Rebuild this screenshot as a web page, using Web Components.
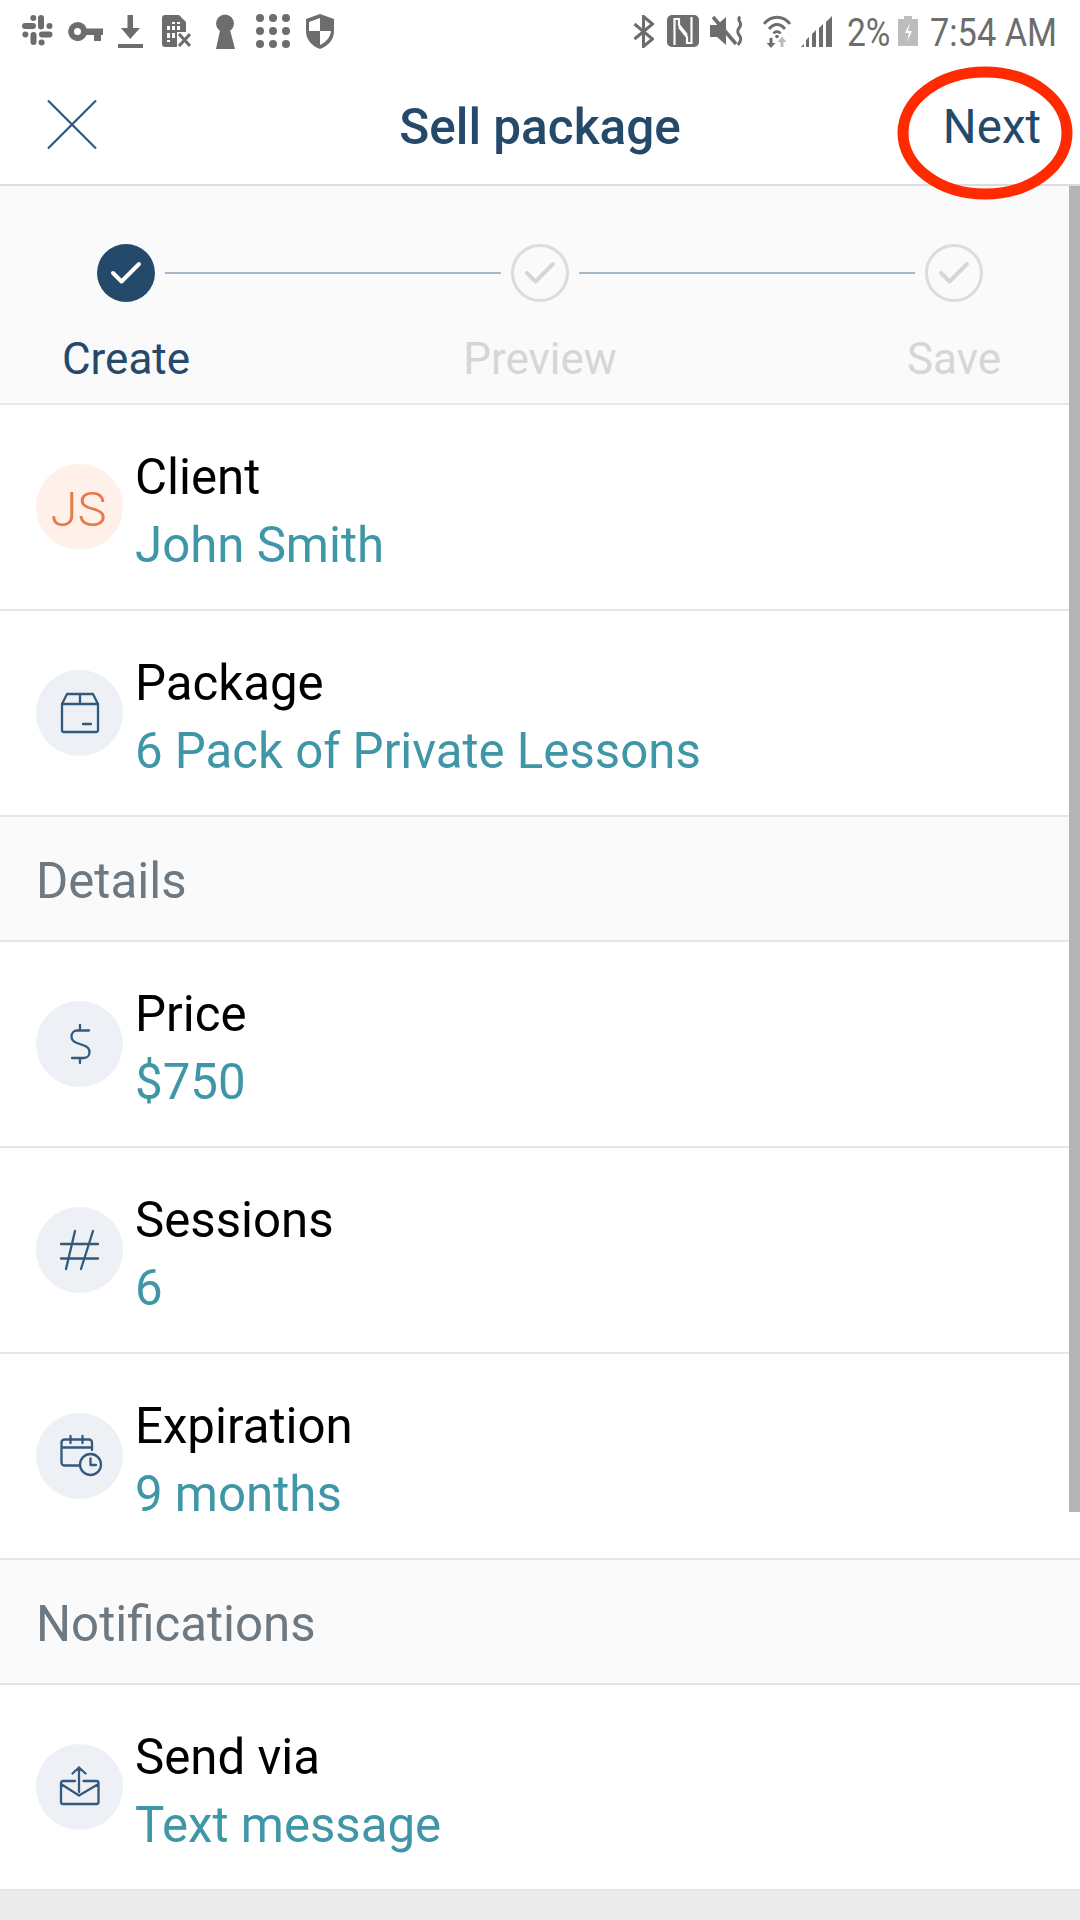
<!DOCTYPE html>
<html lang="en">
<head>
<meta charset="utf-8">
<title>Sell package</title>
<style>
html,body{margin:0;padding:0;background:#ebebeb}
body{width:1080px;height:1920px;overflow:hidden;position:relative;font-family:Roboto,"Liberation Sans",sans-serif}
</style>
</head>
<body>
<status-bar></status-bar>
<app-header heading="Sell package" action="Next"></app-header>
<step-bar></step-bar>
<form-row label="Client" value="John Smith"><round-badge tone="peach">JS</round-badge></form-row>
<form-row label="Package" value="6 Pack of Private Lessons"><round-badge><app-icon name="box"></app-icon></round-badge></form-row>
<section-head>Details</section-head>
<form-row label="Price" value="$750"><round-badge><app-icon name="dollar"></app-icon></round-badge></form-row>
<form-row label="Sessions" value="6"><round-badge><app-icon name="hash"></app-icon></round-badge></form-row>
<form-row label="Expiration" value="9 months"><round-badge><app-icon name="calendar"></app-icon></round-badge></form-row>
<section-head>Notifications</section-head>
<form-row label="Send via" value="Text message"><round-badge><app-icon name="send"></app-icon></round-badge></form-row>
<scroll-thumb></scroll-thumb>

<script>
const G='#6d6d6d';
const STATUS={
 slack:[32,32,22,`<g fill="none" stroke="${G}" stroke-width="6" stroke-linecap="round"><path d="M3 11h8M19 3v8.500M20 19.500h7.500M11.500 20v7"/></g><g fill="${G}"><circle cx="11.300" cy="3" r="3"/><circle cx="27.500" cy="11" r="3"/><circle cx="19.600" cy="27.500" r="3"/><circle cx="3.400" cy="19.500" r="3"/></g>`],
 key:[35,19,14,`<path fill="${G}" fill-rule="evenodd" d="M9.500 0a9.500 9.500 0 0 1 9 6.500H35v6.500h-2v6h-7v-6h-7.500a9.500 9.500 0 1 1-9-13zm0 6a3.500 3.500 0 1 0 0 7 3.500 3.500 0 0 0 0-7z"/>`],
 download:[25,33,15,`<path fill="${G}" d="M9.500 0h5.500v13h7L12.300 24 3 13h6.500zM0 29h25v4H0z"/>`],
 sim:[29,32,19,`<path fill="${G}" d="M3 0h14l7 7v13l-7 7v5H3a3 3 0 0 1-3-3V3a3 3 0 0 1 3-3z"/><path fill="#fff" d="M5 11h3v4H5zM10 11h3v4h-3zM15 11h3v4h-3zM5 18h3v5H5zM10 18h3v5h-3zM10 7h3v2h-3zM15 7h3v2h-3zM5 25h3v2H5z"/><path fill="#fff" d="M15 17h14v15H15z"/><path stroke="${G}" stroke-width="3" fill="none" d="M17 19l11 12M28 19L17 31"/>`],
 keyhole:[20,35,24,`<circle cx="10" cy="9.500" r="9" fill="${G}"/><path fill="${G}" d="M6 12h8l6 23H1z"/>`],
 grid:[34,34,21,`<g fill="${G}"><circle cx="4" cy="4" r="4"/><circle cx="17" cy="4" r="4"/><circle cx="30" cy="4" r="4"/><circle cx="4" cy="17" r="4"/><circle cx="17" cy="17" r="4"/><circle cx="30" cy="17" r="4"/><circle cx="4" cy="30" r="4"/><circle cx="17" cy="30" r="4"/><circle cx="30" cy="30" r="4"/></g>`],
 shield:[28,35,16,`<path fill="${G}" d="M14 0l14 5v12c0 9-6 15-14 18C6 32 0 26 0 17V5z"/><path fill="#fff" d="M14 4L3 8v9h11zM14 17h11c-.6 6.500-5 11-11 14z"/>`],
 bt:[21,33,0,`<path fill="none" stroke="${G}" stroke-width="3" d="M1.500 9l18 15-9 7.500V1.500l9 7.500-18 15"/>`],
 nfc:[32,32,13,`<rect width="32" height="32" rx="5" fill="${G}"/><path fill="none" stroke="#fff" stroke-width="2.200" d="M7.500 30V4h4.500v6l8 10M24.500 2v26H20v-6l-8-10"/>`],
 mute:[35,32,10,`<path fill="${G}" d="M1 10h7l9-8v28l-9-8H1z"/><path stroke="${G}" stroke-width="3.500" d="M4 2l23 27"/><path fill="none" stroke="${G}" stroke-width="3" d="M31 1.500c-4 4 3 6 0 10s-3 6 0 10c2 3 0 6-2 8.500"/>`],
 wifi:[28,33,19,`<g fill="none" stroke="${G}" stroke-width="2.800"><path d="M1 9c7-9 19-9 26 0M6 14c5-6 11-6 16 0M10.500 18.500c2-2.500 5-2.500 7 0"/></g><circle cx="14" cy="21.500" r="1.800" fill="${G}"/><path fill="${G}" d="M6.500 23h3v5h3l-4.500 5-4.500-5h3z"/><path fill="#bdbdbd" d="M17.500 32v-5h-3l4.500-5.500 4.500 5.500h-3v5z"/>`],
 signal:[32,31,10,`<path fill="${G}" d="M0 31l3-3v3zM5 31v-7l3-3v10zM11 31V18l4-4v17zM18 31V12l4-4v23zM25 31V6l6-6v31z"/>`],
 battery:[20,30,10,`<path fill="#bdbdbd" d="M6 0h8v3h6v27H0V3h6z"/><path fill="#fff" d="M12 7l-5 10h4l-2 9 5-11h-4z"/>`]
};
function sicon(n){const[w,h,ml,b]=STATUS[n];return `<svg width="${w}" height="${h}" viewBox="0 0 ${w} ${h}" style="margin-left:${ml}px;flex:none" aria-hidden="true">${b}</svg>`}

class StatusBar extends HTMLElement{
 constructor(){super();this.attachShadow({mode:'open'}).innerHTML=`<style>
 :host{display:flex;align-items:center;height:62px;background:#fff;box-sizing:border-box;padding:0 25px 0 0;color:${G};position:relative}
 .l,.r{display:flex;align-items:center}
 .r{margin-left:auto}
 .t{display:block;flex:none;font:400 39px/62px Roboto,sans-serif;white-space:nowrap;transform-origin:left center;padding-top:4px}
 </style>
 <div class="l">${['slack','key','download','sim','keyhole','grid','shield'].map(sicon).join('')}</div>
 <div class="r">${['bt','nfc','mute','wifi','signal'].map(sicon).join('')}<span class="t" style="margin-left:14px;width:41px;transform:scaleX(.86)">2%</span>${sicon('battery')}<span class="t" style="margin-left:12px;width:125px;transform:scaleX(.88)">7:54 AM</span></div>`}
}
customElements.define('status-bar',StatusBar);

class AppHeader extends HTMLElement{
 constructor(){super();this.attachShadow({mode:'open'}).innerHTML=`<style>
 :host{display:grid;grid-template-columns:1fr auto 1fr;align-items:center;height:124px;box-sizing:border-box;background:#fff;border-bottom:2px solid #dcdcdc;color:#24496b;padding:2px 39px 0 47px;position:relative}
 svg.x{display:block}
 h1{margin:8px 0 0;font:500 49.500px/1 Roboto,sans-serif;position:relative;left:-4px}
 .a{justify-self:end;margin-top:8px;font:400 47.500px/1 Roboto,sans-serif}
 .ring{position:absolute;left:897px;top:3px;pointer-events:none}
 </style>
 <svg class="x" width="50" height="49" viewBox="0 0 50 49" aria-hidden="true"><path d="M1 .5l48 48M49 .5l-48 48" stroke="#2f5b82" stroke-width="2.200" fill="none"/></svg>
 <h1>${this.getAttribute('heading')}</h1>
 <span class="a">${this.getAttribute('action')}</span>
 <svg class="ring" width="178" height="136" viewBox="0 0 178 136" aria-hidden="true"><ellipse cx="88" cy="68" rx="82" ry="61" fill="none" stroke="#ff2a00" stroke-width="11"/></svg>`}
}
customElements.define('app-header',AppHeader);

const check=(c)=>`<svg width="34" height="32" viewBox="0 0 34 32" aria-hidden="true"><path d="M4 16l8.500 8.500L30 7" fill="none" stroke="${c}" stroke-width="4" stroke-linecap="round" stroke-linejoin="round"/></svg>`;
class StepBar extends HTMLElement{
 constructor(){super();this.attachShadow({mode:'open'}).innerHTML=`<style>
 :host{display:block;height:219px;box-sizing:border-box;background:#fafafa;border-bottom:2px solid #e1e9ec;padding-top:58px}
 .track{display:flex;align-items:center;padding:0 97px}
 .dot{width:58px;height:58px;border-radius:50%;box-sizing:border-box;display:flex;align-items:center;justify-content:center;flex:none}
 .on{background:#24496b}
 .off{border:3px solid #dcdcdc}
 .ln{flex:1;height:2px;background:#a7b6c4;margin:0 10px}
 .labels{display:grid;grid-template-columns:252px 1fr 252px;margin-top:33px;font:400 44px/48px Roboto,sans-serif;text-align:center;color:#d6d6d6}
 .cur{color:#24496b}
 </style>
 <div class="track"><span class="dot on">${check('#fff')}</span><span class="ln"></span><span class="dot off">${check('#d6d6d6')}</span><span class="ln"></span><span class="dot off">${check('#d6d6d6')}</span></div>
 <div class="labels"><span class="cur">Create</span><span>Preview</span><span>Save</span></div>`}
}
customElements.define('step-bar',StepBar);

class FormRow extends HTMLElement{
 constructor(){super();this.attachShadow({mode:'open'}).innerHTML=`<style>
 :host{display:flex;align-items:center;height:206px;box-sizing:border-box;background:#fff;border-bottom:2px solid #dfe9ea;padding-left:36px;gap:12px}
 .txt{display:flex;flex-direction:column;padding-top:7px}
 .k{font:400 49.200px/68px Roboto,sans-serif;color:#000}
 .v{font:400 49.200px/68px Roboto,sans-serif;color:#3e96a6}
 </style><slot></slot><div class="txt"><span class="k">${this.getAttribute('label')}</span><span class="v">${this.getAttribute('value')}</span></div>`}
}
customElements.define('form-row',FormRow);

class RoundBadge extends HTMLElement{
 constructor(){super();const p=this.getAttribute('tone')==='peach';this.attachShadow({mode:'open'}).innerHTML=`<style>
 :host{display:flex;align-items:center;justify-content:center;width:87px;height:86px;border-radius:50%;flex:none;background:${p?'#fff0ea':'#edf0f4'};color:#e8794a;font:300 49px/1 Roboto,sans-serif;box-sizing:border-box;padding:${p?'4px 2px 0 0':'0'}}
 </style><slot></slot>`}
}
customElements.define('round-badge',RoundBadge);

const ICONS={
 box:`<path d="M9 3h26l5 10v26a2 2 0 0 1-2 2H6a2 2 0 0 1-2-2V13zM4 13h36M22 3v10M25 33h8"/>`,
 dollar:`<path d="M31 8.500H19c-3 0-5.500 2.500-5.500 6 0 3.500 2.500 5.500 5.500 6.500l7 2.500c3 1 5.500 3 5.500 6.500s-2.500 6-5.500 6H14M22 3v5.500M22 36v5"/>`,
 hash:`<path d="M3 16h37M3 30.500h37M17 3L8 41M35 3l-12 38"/>`,
 calendar:`<path d="M21 31.500H6.500a3 3 0 0 1-3-3V8.500a3 3 0 0 1 3-3H31a3 3 0 0 1 3 3V16M3.500 13.500h30M12.500 2v7M24.500 2v7"/><circle cx="32.500" cy="30.500" r="10.500"/><path d="M32.500 24.500v6.500h5.500"/>`,
 send:`<path d="M17 16H5a2 2 0 0 0-2 2v19a2 2 0 0 0 2 2h33.500a2 2 0 0 0 2-2V18a2 2 0 0 0-2-2H25.500M3 19l18 11.500L40.500 19M21 27V2.500M14.500 8.500l6.500-6 6.500 6"/>`
};
class AppIcon extends HTMLElement{
 constructor(){super();this.attachShadow({mode:'open'}).innerHTML=`<style>:host{display:block;width:44px;height:44px}svg{display:block;overflow:visible}</style><svg width="44" height="44" viewBox="0 0 44 44" fill="none" stroke="#33597d" stroke-width="2.300" stroke-linecap="round" stroke-linejoin="round" aria-hidden="true">${ICONS[this.getAttribute('name')]}</svg>`}
}
customElements.define('app-icon',AppIcon);

class SectionHead extends HTMLElement{
 constructor(){super();this.attachShadow({mode:'open'}).innerHTML=`<style>
 :host{display:flex;align-items:center;height:125px;box-sizing:border-box;background:#fafafa;border-bottom:2px solid #dfe9ea;padding:7px 0 0 36px;color:#6c7882;font:400 49.200px/1 Roboto,sans-serif}
 </style><slot></slot>`}
}
customElements.define('section-head',SectionHead);

class ScrollThumb extends HTMLElement{
 constructor(){super();this.attachShadow({mode:'open'}).innerHTML=`<style>
 :host{position:absolute;right:0;top:186px;width:11px;height:1326px;background:#b5b5b5}
 </style>`}
}
customElements.define('scroll-thumb',ScrollThumb);
</script>
</body>
</html>
